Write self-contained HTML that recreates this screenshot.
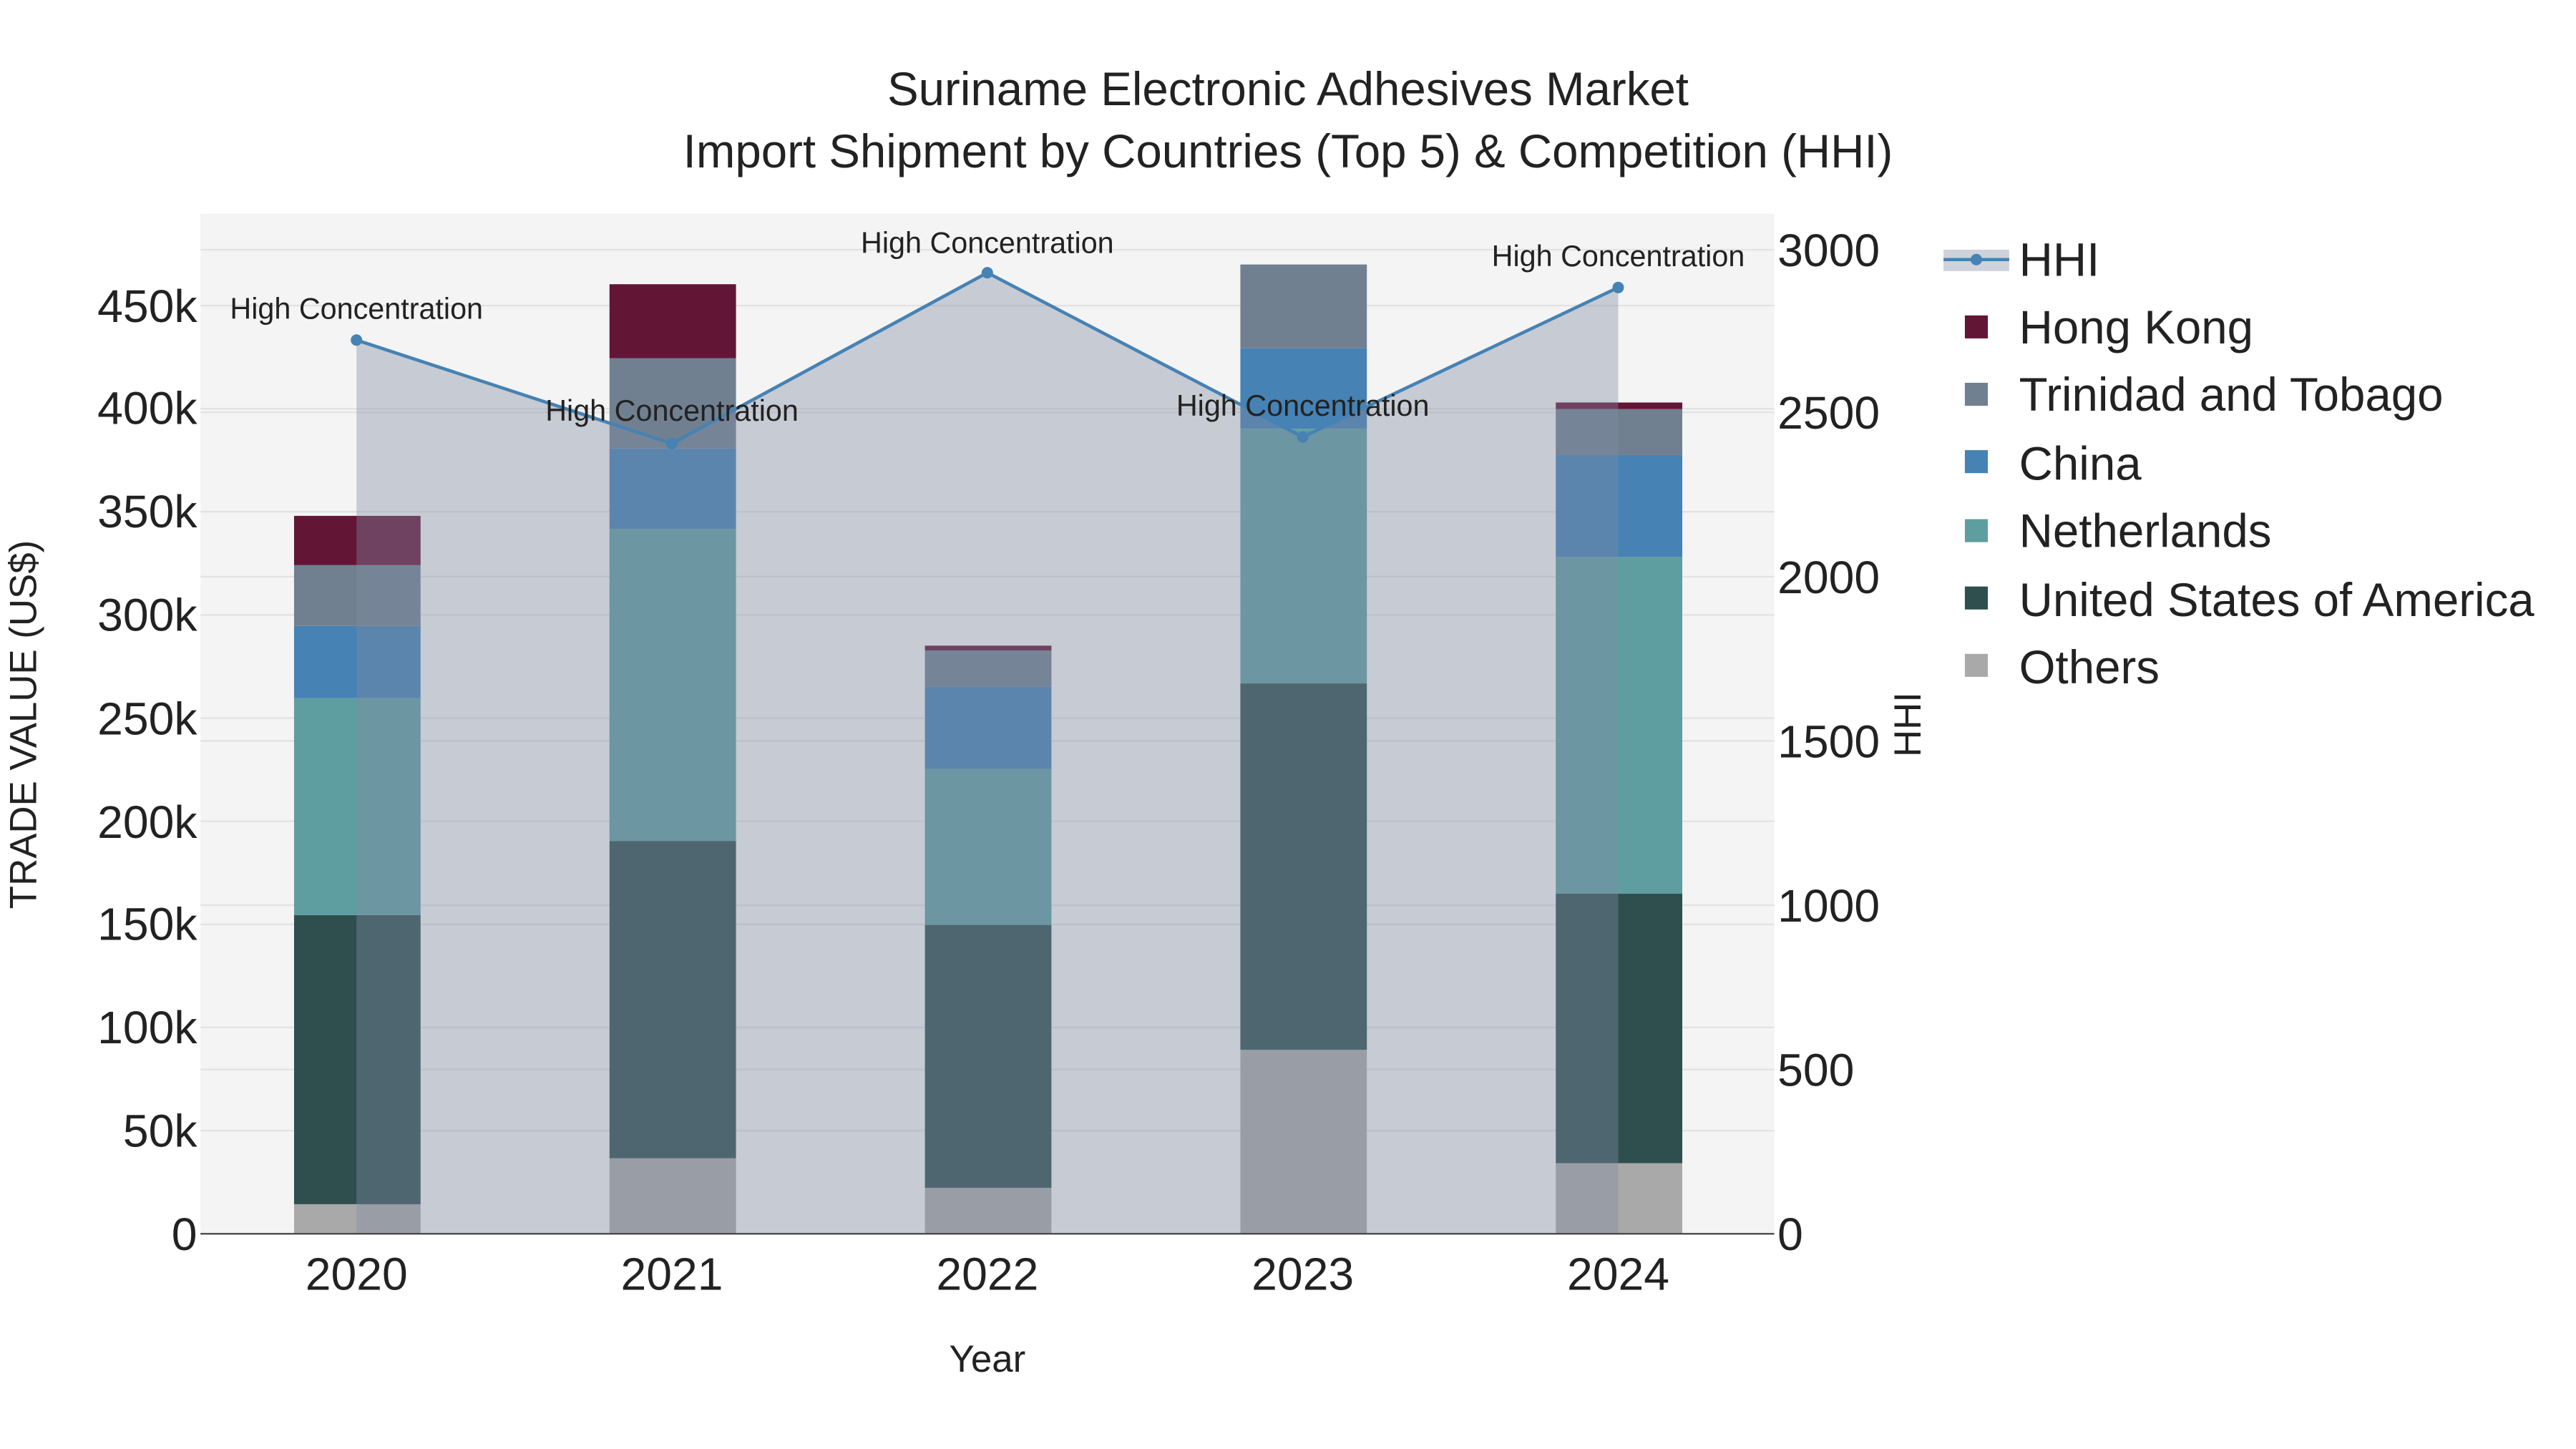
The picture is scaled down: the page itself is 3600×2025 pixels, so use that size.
<!DOCTYPE html>
<html><head><meta charset="utf-8"><style>
html,body{margin:0;padding:0;background:#fff;}
svg{display:block;}
text{font-family:"Liberation Sans",sans-serif;fill:#222;}
</style></head><body>
<svg width="3600" height="2025" viewBox="0 0 1568 882" preserveAspectRatio="none" xmlns="http://www.w3.org/2000/svg">
<rect x="0" y="0" width="1568" height="882" fill="#fff"/>
<rect x="122" y="130" width="958" height="621" fill="#f4f4f4"/>
<g stroke="#e2e2e2" stroke-width="1">
<line x1="122" x2="1080" y1="688.2" y2="688.2"/><line x1="122" x2="1080" y1="625.4" y2="625.4"/>
<line x1="122" x2="1080" y1="562.7" y2="562.7"/><line x1="122" x2="1080" y1="499.9" y2="499.9"/>
<line x1="122" x2="1080" y1="437.1" y2="437.1"/><line x1="122" x2="1080" y1="374.3" y2="374.3"/>
<line x1="122" x2="1080" y1="311.5" y2="311.5"/><line x1="122" x2="1080" y1="248.8" y2="248.8"/>
<line x1="122" x2="1080" y1="186" y2="186"/>
<line x1="122" x2="1080" y1="651" y2="651"/><line x1="122" x2="1080" y1="551" y2="551"/>
<line x1="122" x2="1080" y1="451" y2="451"/><line x1="122" x2="1080" y1="351" y2="351"/>
<line x1="122" x2="1080" y1="251" y2="251"/><line x1="122" x2="1080" y1="152" y2="152"/>
</g>
<g>
<rect x="179" y="733" width="77" height="18" fill="#a9a9a9"/>
<rect x="179" y="557" width="77" height="176" fill="#2f4f4f"/>
<rect x="179" y="425" width="77" height="132" fill="#5f9ea0"/>
<rect x="179" y="381" width="77" height="44" fill="#4682b4"/>
<rect x="179" y="344" width="77" height="37" fill="#708090"/>
<rect x="179" y="314" width="77" height="30" fill="#631536"/>
<rect x="371" y="705" width="77" height="46" fill="#a9a9a9"/>
<rect x="371" y="512" width="77" height="193" fill="#2f4f4f"/>
<rect x="371" y="322" width="77" height="190" fill="#5f9ea0"/>
<rect x="371" y="273" width="77" height="49" fill="#4682b4"/>
<rect x="371" y="218" width="77" height="55" fill="#708090"/>
<rect x="371" y="173" width="77" height="45" fill="#631536"/>
<rect x="563" y="723" width="77" height="28" fill="#a9a9a9"/>
<rect x="563" y="563" width="77" height="160" fill="#2f4f4f"/>
<rect x="563" y="468" width="77" height="95" fill="#5f9ea0"/>
<rect x="563" y="418" width="77" height="50" fill="#4682b4"/>
<rect x="563" y="396" width="77" height="22" fill="#708090"/>
<rect x="563" y="393" width="77" height="3" fill="#631536"/>
<rect x="755" y="639" width="77" height="112" fill="#a9a9a9"/>
<rect x="755" y="416" width="77" height="223" fill="#2f4f4f"/>
<rect x="755" y="261" width="77" height="155" fill="#5f9ea0"/>
<rect x="755" y="212" width="77" height="49" fill="#4682b4"/>
<rect x="755" y="161" width="77" height="51" fill="#708090"/>
<rect x="947" y="708" width="77" height="43" fill="#a9a9a9"/>
<rect x="947" y="544" width="77" height="164" fill="#2f4f4f"/>
<rect x="947" y="339" width="77" height="205" fill="#5f9ea0"/>
<rect x="947" y="277" width="77" height="62" fill="#4682b4"/>
<rect x="947" y="249" width="77" height="28" fill="#708090"/>
<rect x="947" y="245" width="77" height="4" fill="#631536"/>
</g>
<polygon points="217,207 409,270 601,166 793,266 985,175 985,751 217,751" fill="rgb(130,140,161)" fill-opacity="0.39"/>
<polyline points="217,207 409,270 601,166 793,266 985,175" fill="none" stroke="#4682b4" stroke-width="2"/>
<g fill="#4682b4"><circle cx="217" cy="207" r="3.5"/><circle cx="409" cy="270" r="3.5"/><circle cx="601" cy="166" r="3.5"/><circle cx="793" cy="266" r="3.5"/><circle cx="985" cy="175" r="3.5"/></g>
<line x1="122" x2="1080" y1="751" y2="751" stroke="#444" stroke-width="1"/>
<g font-size="18" text-anchor="middle">
<text x="217" y="194">High Concentration</text>
<text x="409" y="256">High Concentration</text>
<text x="601" y="154">High Concentration</text>
<text x="793" y="253">High Concentration</text>
<text x="985" y="162">High Concentration</text>
</g>
<g font-size="28" text-anchor="end">
<text x="120" y="761">0</text><text x="120" y="698">50k</text><text x="120" y="635">100k</text>
<text x="120" y="572">150k</text><text x="120" y="510">200k</text><text x="120" y="447">250k</text>
<text x="120" y="384">300k</text><text x="120" y="321">350k</text><text x="120" y="258">400k</text>
<text x="120" y="196">450k</text>
</g>
<g font-size="28" text-anchor="start">
<text x="1082" y="761">0</text><text x="1082" y="661">500</text><text x="1082" y="561">1000</text>
<text x="1082" y="461">1500</text><text x="1082" y="361">2000</text><text x="1082" y="261">2500</text>
<text x="1082" y="162">3000</text>
</g>
<g font-size="28" text-anchor="middle">
<text x="217" y="785">2020</text><text x="409" y="785">2021</text><text x="601" y="785">2022</text>
<text x="793" y="785">2023</text><text x="985" y="785">2024</text>
</g>
<text x="601" y="835" font-size="23" text-anchor="middle">Year</text>
<text transform="translate(22,441) rotate(-90)" font-size="23" text-anchor="middle">TRADE VALUE (US$)</text>
<text transform="translate(1169,441) rotate(-90)" font-size="23" text-anchor="middle">HHI</text>
<text x="784" y="64" font-size="28.5" text-anchor="middle">Suriname Electronic Adhesives Market</text>
<text x="784" y="102" font-size="28.5" text-anchor="middle">Import Shipment by Countries (Top 5) &amp; Competition (HHI)</text>
<rect x="1183" y="152" width="40" height="13" fill="rgb(130,140,161)" fill-opacity="0.39"/>
<line x1="1183" x2="1223" y1="158" y2="158" stroke="#4682b4" stroke-width="2"/>
<circle cx="1203" cy="158" r="3.5" fill="#4682b4"/>
<text x="1229" y="168" font-size="28.5">HHI</text>
<rect x="1196" y="192" width="14" height="14" fill="#631536"/><text x="1229" y="209" font-size="28.5">Hong Kong</text>
<rect x="1196" y="233" width="14" height="14" fill="#708090"/><text x="1229" y="250" font-size="28.5">Trinidad and Tobago</text>
<rect x="1196" y="274" width="14" height="14" fill="#4682b4"/><text x="1229" y="292" font-size="28.5">China</text>
<rect x="1196" y="316" width="14" height="14" fill="#5f9ea0"/><text x="1229" y="333" font-size="28.5">Netherlands</text>
<rect x="1196" y="357" width="14" height="14" fill="#2f4f4f"/><text x="1229" y="375" font-size="28.5">United States of America</text>
<rect x="1196" y="398" width="14" height="14" fill="#a9a9a9"/><text x="1229" y="416" font-size="28.5">Others</text>
</svg>
</body></html>
